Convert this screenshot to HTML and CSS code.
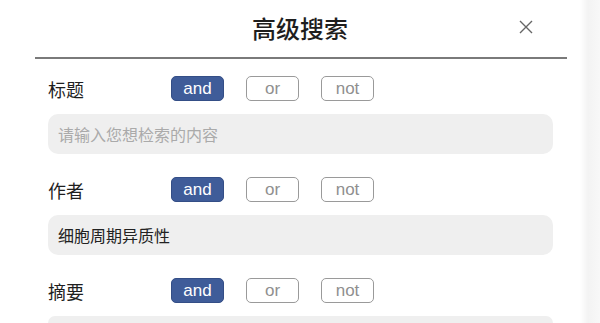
FILE: index.html
```html
<!DOCTYPE html>
<html lang="zh">
<head>
<meta charset="utf-8">
<title>高级搜索</title>
<link rel="stylesheet" href="styles.css">
</head>
<body>
<div class="dialog">
  <header class="header">
    <span></span>
    <h1 class="title">高级搜索</h1>
    <button class="close" aria-label="关闭">
      <svg width="14" height="14" viewBox="0 0 14 14"><path d="M1 1L13 13M13 1L1 13" stroke="#666" stroke-width="1.4" fill="none"/></svg>
    </button>
  </header>
  <div class="divider"></div>

  <section class="field">
    <div class="field-row">
      <span class="label">标题</span>
      <div class="ops">
        <span class="op op-active">and</span>
        <span class="op">or</span>
        <span class="op">not</span>
      </div>
    </div>
    <div class="input placeholder">请输入您想检索的内容</div>
  </section>

  <section class="field">
    <div class="field-row">
      <span class="label">作者</span>
      <div class="ops">
        <span class="op op-active">and</span>
        <span class="op">or</span>
        <span class="op">not</span>
      </div>
    </div>
    <div class="input">细胞周期异质性</div>
  </section>

  <section class="field">
    <div class="field-row">
      <span class="label">摘要</span>
      <div class="ops">
        <span class="op op-active">and</span>
        <span class="op">or</span>
        <span class="op">not</span>
      </div>
    </div>
    <div class="input input-cut placeholder"></div>
  </section>
</div>
</body>
</html>
```
FILE: styles.css
```css
html, body {
  margin: 0;
  padding: 0;
}
body {
  width: 600px;
  height: 323px;
  overflow: hidden;
  background: linear-gradient(to right, #ffffff 0, #ffffff 580px, #f3f3f3 588px, #f8f8f8 600px);
  font-family: "Noto Sans CJK SC", "Noto Sans", sans-serif;
  color: #222;
}
.dialog {
  width: 600px;
}
.header {
  height: 57px;
  display: grid;
  grid-template-columns: 1fr auto 1fr;
  align-items: center;
}
.title {
  margin: 0;
  font-size: 24px;
  font-weight: 500;
  line-height: 1;
  color: #1e1e1e;
  padding-bottom: 2px;
}
.close {
  justify-self: end;
  margin-right: 67px;
  margin-bottom: 4px;
  width: 14px;
  height: 14px;
  padding: 0;
  border: 0;
  background: transparent;
  display: flex;
}
.divider {
  height: 2px;
  margin: 0 33px 0 35px;
  background: #7a7a7a;
}
.field {
  padding: 0 47px 0 48px;
  margin-top: 23px;
}
.field:first-of-type {
  margin-top: 17px;
}
.field-row {
  display: flex;
  align-items: center;
  height: 25px;
}
.label {
  width: 123px;
  font-size: 18px;
  line-height: 1;
  color: #1f1f1f;
}
.ops {
  display: flex;
  gap: 22px;
}
.op {
  box-sizing: border-box;
  width: 53px;
  height: 25px;
  border: 1px solid #9a9a9a;
  border-radius: 5px;
  display: flex;
  align-items: center;
  justify-content: center;
  font-family: "Liberation Sans", Arial, sans-serif;
  font-size: 17px;
  color: #8f8f8f;
  background: #fff;
}
.op-active {
  background: #3f5c99;
  border-color: #344e86;
  color: #fff;
}
.input {
  margin-top: 13px;
  height: 40px;
  box-sizing: border-box;
  border-radius: 10px;
  background: #efefef;
  padding-left: 10px;
  display: flex;
  align-items: center;
  font-size: 16px;
  color: #222;
}
.input-cut {
  height: 7px;
  border-radius: 10px 10px 0 0;
}
.placeholder {
  color: #aaaaaa;
}
```
